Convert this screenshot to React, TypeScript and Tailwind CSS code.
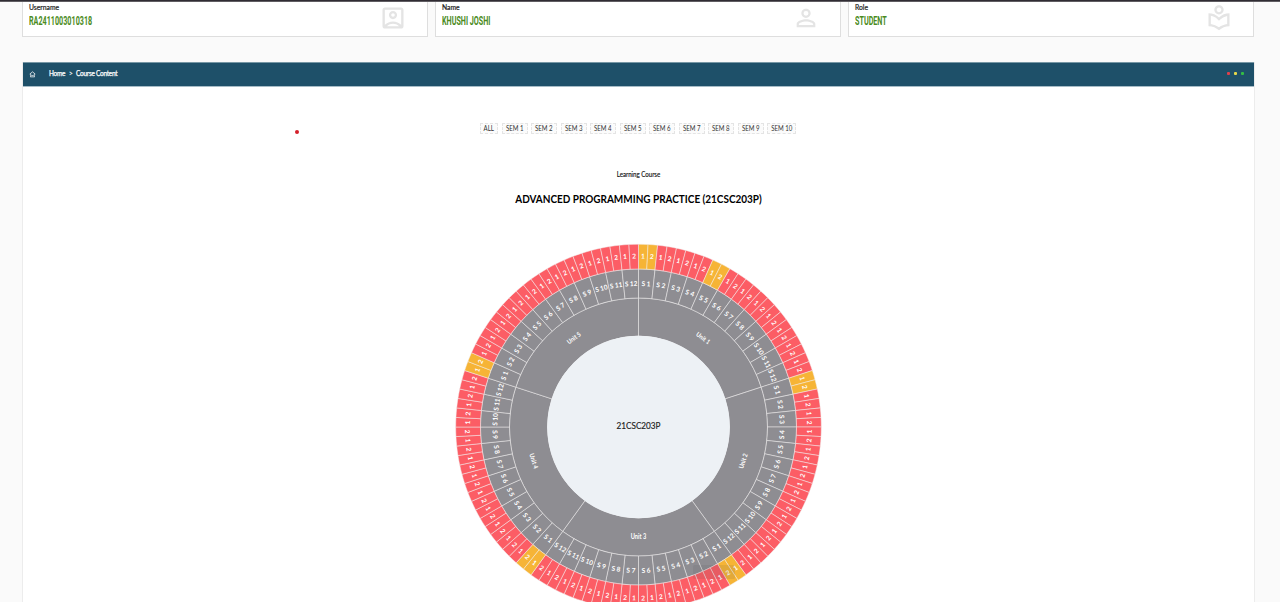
import type { ReactNode } from "react";
import { MdOutlineAccountBox, MdPersonOutline, MdOutlineLocalLibrary } from "react-icons/md";
import { RiHomeSmileLine } from "react-icons/ri";

const CX = 184.5;
const CY = 184;
const UNITS = 5;
const SESSIONS = 12;
const PLANNED = new Set(["0-0", "0-4", "1-0", "2-0", "3-0", "4-0"]);

const SEMESTERS: [string, string][] = [
  ["ALL", "w-[18px]"],
  ["SEM 1", "w-[26px]"],
  ["SEM 2", "w-[26px]"],
  ["SEM 3", "w-[26px]"],
  ["SEM 4", "w-[26px]"],
  ["SEM 5", "w-[26px]"],
  ["SEM 6", "w-[26px]"],
  ["SEM 7", "w-[26px]"],
  ["SEM 8", "w-[26px]"],
  ["SEM 9", "w-[26px]"],
  ["SEM 10", "w-[29px]"],
];

function point(radius: number, deg: number) {
  const a = (deg * Math.PI) / 180;
  return [CX + radius * Math.sin(a), CY - radius * Math.cos(a)];
}

function slice(r0: number, r1: number, from: number, to: number) {
  const [ax, ay] = point(r1, from);
  const [bx, by] = point(r1, to);
  const [cx, cy] = point(r0, to);
  const [dx, dy] = point(r0, from);
  return `M${ax} ${ay}A${r1} ${r1} 0 0 1 ${bx} ${by}L${cx} ${cy}A${r0} ${r0} 0 0 0 ${dx} ${dy}Z`;
}

type SliceProps = {
  inner: number;
  outer: number;
  from: number;
  to: number;
  fill: string;
  label: string;
  labelRadius: number;
  size: number;
  length?: number;
};

function Slice({ inner, outer, from, to, fill, label, labelRadius, size, length }: SliceProps) {
  const mid = (from + to) / 2;
  const [x, y] = point(labelRadius, mid);
  const turn = mid > 90 && mid < 270 ? mid - 180 : mid;
  return (
    <g>
      <path d={slice(inner, outer, from, to)} fill={fill} stroke="#f1eeee" strokeWidth={0.5} />
      <text
        transform={`translate(${x} ${y}) rotate(${turn})`}
        textAnchor="middle"
        dy="0.36em"
        fontSize={size}
        fontWeight={700}
        fill="#fff"
        textLength={length}
        lengthAdjust="spacingAndGlyphs"
      >
        {label}
      </text>
    </g>
  );
}

function Sunburst() {
  const slices: ReactNode[] = [];
  for (let u = 0; u < UNITS; u++) {
    slices.push(
      <Slice key={`u${u}`} inner={91} outer={129} from={u * 72} to={u * 72 + 72} fill="#8e8d92"
        label={`Unit ${u + 1}`} labelRadius={110} size={6.5} length={15.5} />,
    );
    for (let s = 0; s < SESSIONS; s++) {
      const start = u * 72 + s * 6;
      slices.push(
        <Slice key={`s${u}-${s}`} inner={129} outer={158} from={start} to={start + 6} fill="#8e8d92"
          label={`S ${s + 1}`} labelRadius={143.5} size={6.7} length={s > 8 ? 12.5 : 9} />,
      );
      for (let h = 0; h < 2; h++) {
        slices.push(
          <Slice key={`h${u}-${s}-${h}`} inner={158} outer={182.8} from={start + h * 3} to={start + h * 3 + 3}
            fill={PLANNED.has(`${u}-${s}`) ? "#f6b436" : "#fc5d65"}
            label={`${h + 1}`} labelRadius={171} size={6.6} />,
        );
      }
    }
  }
  return (
    <svg width="369" height="368" viewBox="0 0 369 368" className="block shrink-0 font-['Lato',sans-serif]">
      {slices}
      <circle cx={CX} cy={CY} r={91.3} fill="#edf1f5" />
      <text x={CX} y={CY + 2.2} textAnchor="middle" fontSize={8.8} textLength={44} lengthAdjust="spacingAndGlyphs" fill="#222" stroke="#222" strokeWidth={0.15}>
        21CSC203P
      </text>
      <rect x={239} y={322} width={42} height={14} rx={1.5} fill="#555" opacity={0.12} />
    </svg>
  );
}

function InfoCard({ label, value, icon }: { label: string; value: string; icon: ReactNode }) {
  return (
    <div className="flex h-[35px] flex-1 justify-between border border-t-0 border-[#dedede] bg-white pl-[6px] pr-[20px]">
      <div>
        <div className="mt-px origin-left scale-x-[0.94] text-[7.2px] leading-[10px] text-[#222] [-webkit-text-stroke:0.2px_#222]">{label}</div>
        <div className="mt-[2px] w-[110px] origin-left scale-x-[0.6] whitespace-nowrap font-['Roboto',sans-serif] text-[12px] font-bold leading-[13px] text-[#4b8b1d]">{value}</div>
      </div>
      <div className="mt-[1.5px] h-7 w-7 text-[28px] text-[#e4e4e4]">{icon}</div>
    </div>
  );
}

export default function App() {
  return (
    <div className="flex h-[602px] w-[1280px] flex-col overflow-hidden bg-[#fafafa] font-['Lato',sans-serif]">
      <div className="h-[2px] shrink-0 border-b border-[#605d62] bg-[#302c33]" />
      <div className="ml-[22px] flex w-[1232px] shrink-0 gap-[7px]">
        <InfoCard label="Username" value="RA2411003010318" icon={<MdOutlineAccountBox />} />
        <InfoCard label="Name" value="KHUSHI JOSHI" icon={<MdPersonOutline />} />
        <InfoCard label="Role" value="STUDENT" icon={<MdOutlineLocalLibrary />} />
      </div>

      <main className="ml-[22px] mt-[25px] flex w-[1233px] flex-1 flex-col border-x border-[#ececec] bg-white">
        <header className="flex h-[25px] shrink-0 items-center border-b border-t border-b-[#a6bcc7] border-t-[#7797a5] bg-[#1e5069] pl-[6px] pr-[10px] text-white">
          <RiHomeSmileLine className="h-[7px] w-[7px]" />
          <nav className="mb-[3px] ml-[13px] flex w-[90px] origin-left scale-x-[0.92] gap-[4px] text-[7px] leading-[10px] tracking-[-0.26px] [-webkit-text-stroke:0.25px_#fff]">
            <span>Home</span>
            <span>&gt;</span>
            <span>Course Content</span>
          </nav>
          <div className="mb-[2px] ml-auto flex gap-[4px]">
            <i className="h-[3px] w-[3px] rounded-[1px] bg-[#e0404c]" />
            <i className="h-[3px] w-[3px] rounded-[1px] bg-[#e5d84b]" />
            <i className="h-[3px] w-[3px] rounded-[1px] bg-[#35bd44]" />
          </div>
        </header>

        <div className="mt-[36px] flex h-[11px] shrink-0 items-start">
          <span className="ml-[272px] mt-[7px] h-[4px] w-[4px] shrink-0 rounded-full bg-[#d41f2a]" />
          <div className="ml-[181px] flex gap-[3.5px]">
            {SEMESTERS.map(([name, width]) => (
              <button key={name} className={`flex h-[11px] shrink-0 justify-center whitespace-nowrap border border-dashed border-[#e4e4e4] bg-[#fbfbfb] text-[6.8px] leading-[9px] text-[#333] ${width}`}>
                <span className="scale-x-[0.9]">{name}</span>
              </button>
            ))}
          </div>
        </div>

        <p className="mt-[35px] scale-x-[0.9] text-center text-[6.8px] leading-[10px] text-[#111] [-webkit-text-stroke:0.15px_#111]">Learning Course</p>
        <h1 className="mt-[13px] scale-x-[0.875] text-center text-[11.4px] font-bold leading-[14px] text-black">ADVANCED PROGRAMMING PRACTICE (21CSC203P)</h1>
        <div className="mt-[37px] flex justify-center">
          <Sunburst />
        </div>
      </main>
    </div>
  );
}
